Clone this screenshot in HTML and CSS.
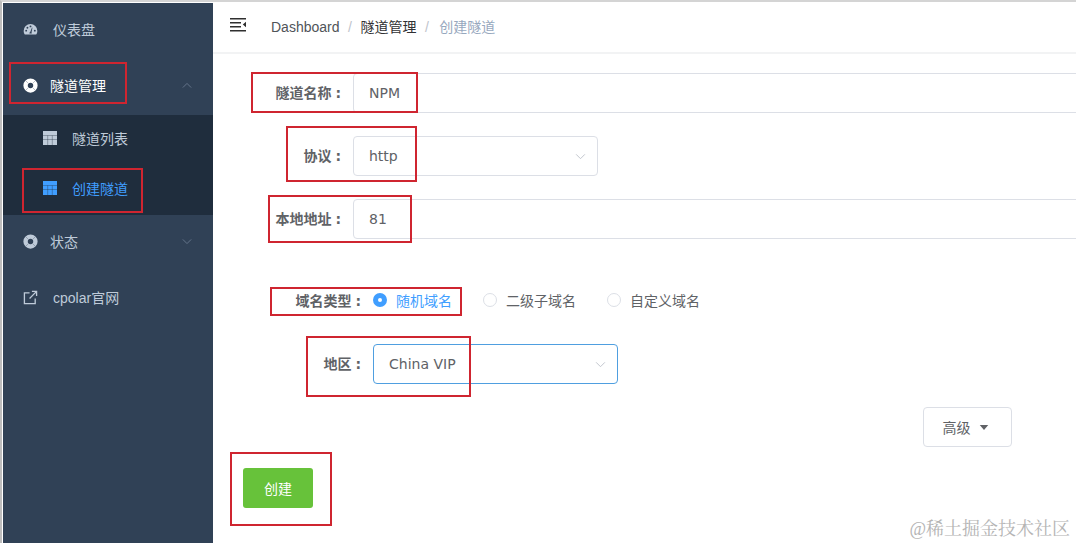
FILE: index.html
```html
<!DOCTYPE html>
<html lang="zh-CN">
<head>
<meta charset="utf-8">
<title>创建隧道</title>
<link rel="stylesheet" href="styles.css">
</head>
<body>
<div class="app">
  <aside class="sidebar">
    <a class="item">
      <svg class="ico" viewBox="0 0 16 16"><path fill-rule="evenodd" d="M8 2.200A7.300 7.300 0 0 0 .7 9.500c0 1.500.4 2.800 1.200 3.900h12.200c.8-1.100 1.200-2.400 1.200-3.900A7.300 7.300 0 0 0 8 2.200zM3.400 10.200a1 1 0 1 1 0-2 1 1 0 0 1 0 2zm1.300-3.100a1 1 0 1 1 0-2 1 1 0 0 1 0 2zM8 5.700a1 1 0 1 1 0-2 1 1 0 0 1 0 2zm1.300 6.500H6.800c0-.8.300-1.400.9-1.600L9.600 5.800l.5.200-1 5c.2.300.2.700.2 1.200zm3.300-2a1 1 0 1 1 0-2 1 1 0 0 1 0 2z"/></svg>
      <span class="lbl-wide">仪表盘</span>
    </a>
    <a class="item item-open">
      <svg class="ico" viewBox="0 0 16 16"><path fill-rule="evenodd" d="M8 .4a7.600 7.600 0 1 0 0 15.200A7.600 7.600 0 0 0 8 .4zm0 4.700a2.900 2.900 0 1 1 0 5.800 2.900 2.900 0 0 1 0-5.800z"/><path class="cut" d="M2.600 2.600l2.700 2.700M13.400 2.600l-2.700 2.700M2.600 13.400l2.700-2.700M13.400 13.400l-2.700-2.700"/></svg>
      <span>隧道管理</span>
      <svg class="chev" viewBox="0 0 12 8"><path d="M1 6.500l5-5 5 5"/></svg>
    </a>
    <div class="submenu">
      <a class="subitem">
        <svg class="ico-s" viewBox="0 0 14 14"><path d="M0 0h14v14H0z"/><path class="grid" d="M0 8.500h14M0 4.500h14M4.700 4.500V14M9.300 4.500V14"/></svg>
        <span>隧道列表</span>
      </a>
      <a class="subitem active">
        <svg class="ico-s" viewBox="0 0 14 14"><path d="M0 0h14v14H0z"/><path class="grid" d="M0 8.500h14M0 4.500h14M4.700 4.500V14M9.300 4.500V14"/></svg>
        <span>创建隧道</span>
      </a>
    </div>
    <a class="item">
      <svg class="ico" viewBox="0 0 16 16"><path fill-rule="evenodd" d="M8 .4a7.600 7.600 0 1 0 0 15.200A7.600 7.600 0 0 0 8 .4zm0 4.700a2.900 2.900 0 1 1 0 5.800 2.900 2.900 0 0 1 0-5.800z"/><path class="cut" d="M2.600 2.600l2.700 2.700M13.400 2.600l-2.700 2.700M2.600 13.400l2.700-2.700M13.400 13.400l-2.700-2.700"/></svg>
      <span>状态</span>
      <svg class="chev" viewBox="0 0 12 8"><path d="M1 1.500l5 5 5-5"/></svg>
    </a>
    <a class="item">
      <svg class="ico" viewBox="0 0 16 16"><path class="line" d="M7 3H1.500v11.500H13V9M9.500 1.500h5v5M14.500 1.500L7 9"/></svg>
      <span class="lbl-wide">cpolar官网</span>
    </a>
  </aside>
  <main class="main">
    <header class="navbar">
      <svg class="hamb" viewBox="0 0 16 14"><path d="M0 0h16v1.500H0zM0 4h11v1.500H0zM0 8h11v1.500H0zM0 12h16v1.500H0zM16 3.800v5.400L12.800 6.500z"/></svg>
      <nav class="crumbs">
        <span class="c-link">Dashboard</span><span class="sep">/</span><span class="c-mid">隧道管理</span><span class="sep">/</span><span class="c-cur">创建隧道</span>
      </nav>
    </header>
    <form class="form">
      <div class="row">
        <label class="label">隧道名称<span class="colon">:</span></label>
        <div class="control input full">NPM</div>
        <i class="mark m1"></i>
      </div>
      <div class="row">
        <label class="label">协议<span class="colon">:</span></label>
        <div class="control input sel"><span>http</span><svg class="arrow" viewBox="0 0 12 8"><path d="M1 1.500l5 5 5-5"/></svg></div>
        <i class="mark m2"></i>
      </div>
      <div class="row">
        <label class="label">本地地址<span class="colon">:</span></label>
        <div class="control input full">81</div>
        <i class="mark m3"></i>
      </div>
      <div class="row row-radio">
        <label class="label label-lg">域名类型<span class="colon">:</span></label>
        <div class="radios">
          <span class="radio on"><i class="dot"></i>随机域名</span>
          <span class="radio"><i class="dot"></i>二级子域名</span>
          <span class="radio"><i class="dot"></i>自定义域名</span>
        </div>
        <i class="mark m4"></i>
      </div>
      <div class="row">
        <label class="label label-lg">地区<span class="colon">:</span></label>
        <div class="control input sel focus"><span>China VIP</span><svg class="arrow" viewBox="0 0 12 8"><path d="M1 1.500l5 5 5-5"/></svg></div>
        <i class="mark m5"></i>
      </div>
      <div class="adv-row">
        <button type="button" class="adv">高级<i class="caret"></i></button>
      </div>
      <div class="submit-row">
        <button type="button" class="create">创建</button>
        <i class="mark m6"></i>
      </div>
    </form>
    <div class="watermark">@稀土掘金技术社区</div>
  </main>
  <i class="mark m7"></i>
  <i class="mark m8"></i>
</div>
</body>
</html>
```
FILE: styles.css
```css
* { box-sizing: border-box; }
html, body { margin: 0; height: 100%; overflow: hidden; background: #fff; }
body {
  font-family: "Liberation Sans", "Noto Sans CJK SC", sans-serif;
  font-size: 14px;
  color: #606266;
}
.app {
  position: relative;
  display: flex;
  width: 1076px;
  height: 543px;
  padding: 1px 0 0 1px;
  border-top: 2px solid #d4d4d4;
  border-left: 2px solid #bdbdbd;
  background: #fff;
  overflow: hidden;
}
.sidebar {
  flex: 0 0 210px;
  height: 100%;
  background: #304156;
  color: #bfcbd9;
}
.item {
  display: flex;
  align-items: center;
  height: 56px;
  padding: 0 0 4px 20px;
  position: relative;
}
.item-open { color: #fff; }
.ico { width: 15px; height: 15px; margin-right: 13px; fill: currentColor; flex: none; }
.cut { fill: none; stroke: #304156; stroke-width: .7; stroke-opacity: .5; }
.line { fill: none; stroke: currentColor; stroke-width: 1.400; }
.lbl-wide { margin-left: 2px; }
.item > span:not(.lbl-wide) { margin-left: -1px; }
.chev {
  position: absolute;
  right: 21px;
  top: 23px;
  width: 10px;
  height: 7px;
  fill: none;
  stroke: #64748a;
  stroke-width: 1.200;
}
.submenu { background: #1f2d3d; }
.subitem {
  display: flex;
  align-items: center;
  height: 50px;
  padding: 0 0 5px 40px;
  color: #bfcbd9;
}
.subitem.active { color: #409eff; }
.ico-s { width: 14px; height: 14px; margin-right: 15px; fill: currentColor; flex: none; }
.grid { fill: none; stroke: #1f2d3d; stroke-width: .5; stroke-opacity: .7; }
.main { flex: 1; min-width: 0; position: relative; }
.navbar {
  display: flex;
  align-items: center;
  height: 51px;
  border-bottom: 2px solid #f2f3f4;
  padding: 0 0 4px 17px;
}
.hamb { width: 16px; height: 14px; fill: #2f2f2f; margin-top: -2px; }
.crumbs { margin-left: 25px; white-space: nowrap; }
.c-link { color: #505459; font-weight: 400; }
.c-mid { color: #303133; }
.c-cur { color: #97a8be; margin-left: 2px; }
.sep { color: #c0c4cc; margin: 0 8.500px; }
.form { padding-top: 19px; position: relative; }
.row {
  display: flex;
  align-items: center;
  height: 40px;
  margin-bottom: 23px;
  position: relative;
}
.label {
  flex: 0 0 140px;
  padding: 0 12px 3px 0;
  text-align: right;
  font-family: "DejaVu Sans", "Noto Sans CJK SC", sans-serif;
  font-weight: 700;
  color: #606266;
  white-space: nowrap;
}
.label-lg { flex-basis: 160px; }
.colon { margin-left: 4px; }
.control {
  display: flex;
  align-items: center;
  height: 40px;
  padding: 0 15px;
  border: 1px solid #dcdfe6;
  border-radius: 4px;
  font-family: "DejaVu Sans", "Noto Sans CJK SC", sans-serif;
  color: #606266;
}
.full { flex: 0 0 800px; }
.sel { width: 245px; justify-content: space-between; }
.focus { border-color: #4f9fe0; }
.arrow { width: 11px; height: 7px; fill: none; stroke: #c0c4cc; stroke-width: 1.100; margin-right: -4px; }
.row-radio { height: 20px; margin: 51px 0 34px; }
.row-radio .label { padding-bottom: 0; }
.radios { display: flex; gap: 31px; }
.radio { display: flex; align-items: center; color: #606266; }
.radio.on { color: #409eff; }
.dot {
  width: 14px;
  height: 14px;
  margin-right: 9px;
  border: 1px solid #dcdfe6;
  border-radius: 50%;
  background: #fff;
}
.on .dot { border: 5px solid #409eff; }
.adv-row { display: flex; justify-content: flex-end; padding-right: 64px; }
.adv {
  display: flex;
  align-items: center;
  justify-content: center;
  width: 89px;
  height: 40px;
  padding: 0 4px 0 0;
  border: 1px solid #dcdfe6;
  border-radius: 4px;
  background: #fff;
  color: #606266;
  font: inherit;
}
.caret {
  margin-left: 8px;
  border: 5px solid transparent;
  border-top-color: #606266;
  border-bottom: 0;
  transform: scaleX(.85);
}
.submit-row { position: relative; padding: 21px 0 0 30px; }
.create {
  display: block;
  width: 70px;
  height: 40px;
  border: 0;
  border-radius: 3px;
  background: #67c23a;
  color: #fff;
  font: inherit;
}
.watermark {
  position: absolute;
  right: 6px;
  bottom: 3px;
  font-family: "Liberation Serif", "Noto Serif CJK SC", "Noto Sans CJK SC", serif;
  font-size: 18px;
  color: #b4b4b4;
  white-space: nowrap;
}
.mark { position: absolute; border: 2px solid #cf2530; pointer-events: none; }
.m1 { left: 38px; top: -1px; width: 167px; height: 41px; }
.m2 { left: 73px; top: -10px; width: 131px; height: 56px; }
.m3 { left: 55px; top: -4px; width: 144px; height: 48px; }
.m4 { left: 57px; top: -3px; width: 192px; height: 29px; }
.m5 { left: 93px; top: -8px; width: 165px; height: 61px; }
.m6 { left: 17px; top: 5px; width: 102px; height: 74px; }
.m7 { left: 7px; top: 60px; width: 118px; height: 42px; }
.m8 { left: 20px; top: 166px; width: 121px; height: 45px; }
```
